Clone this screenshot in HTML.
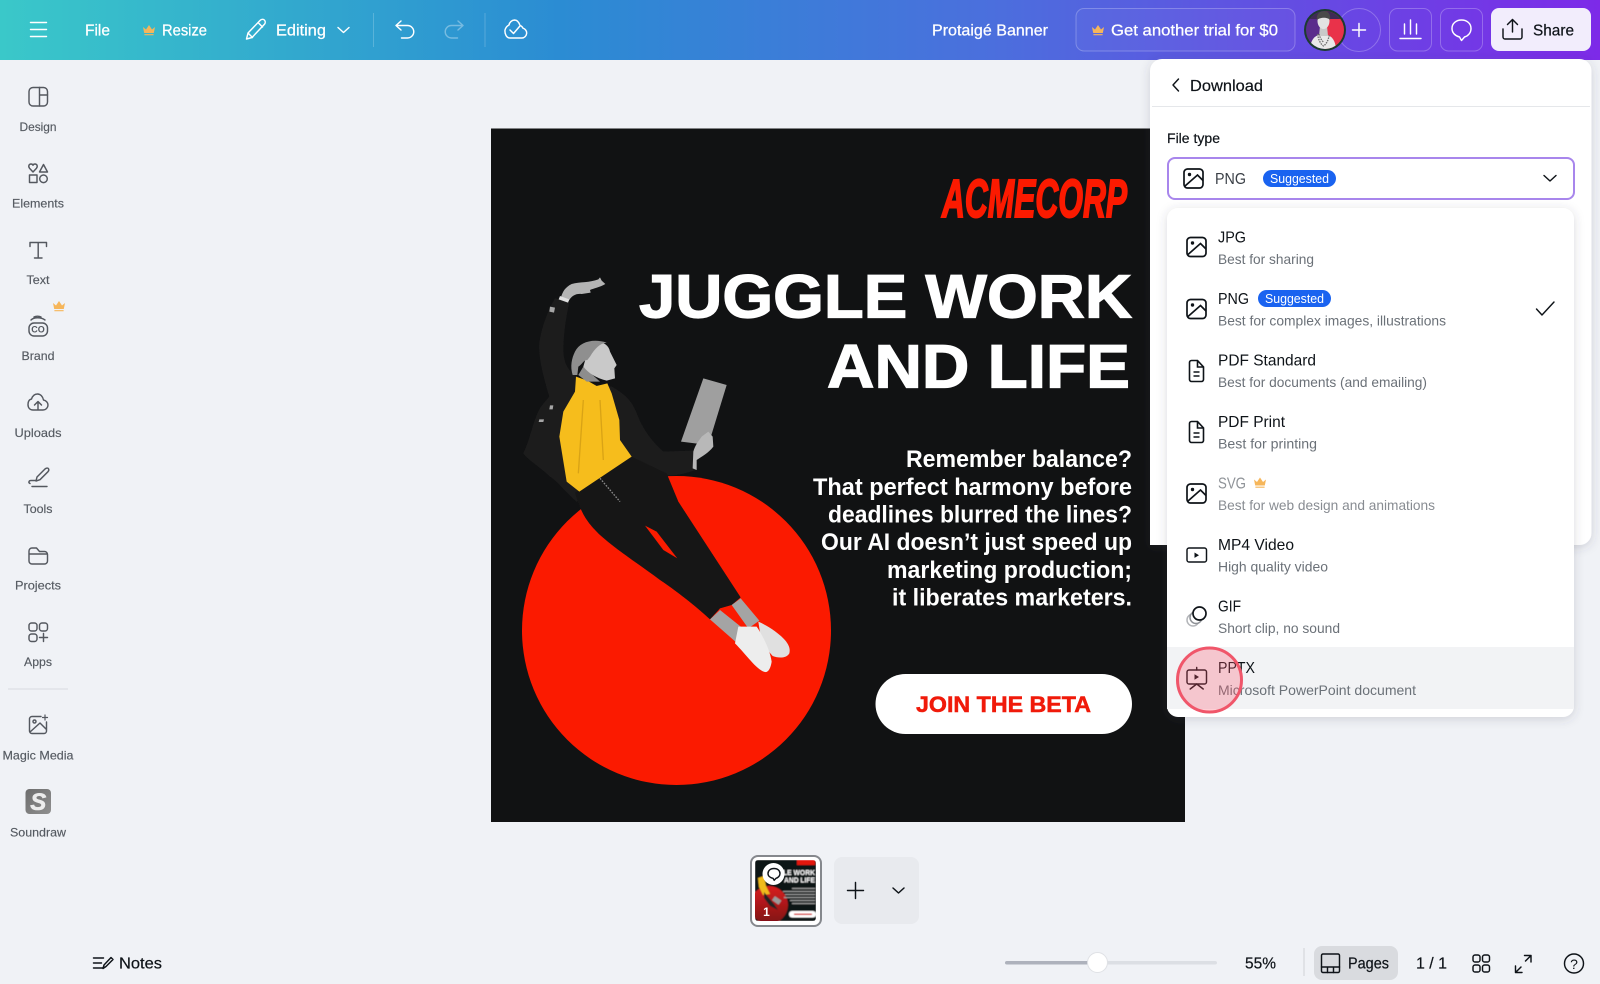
<!DOCTYPE html>
<html lang="en"><head><meta charset="utf-8"><title>Protaigé Banner</title>
<style>
html,body{margin:0;padding:0;width:1600px;height:984px;overflow:hidden;background:#f0f2f6}
svg{display:block;font-family:"Liberation Sans",sans-serif}
.h{fill:#fff;font-size:16px;stroke:#fff;stroke-width:.25px}
.s{fill:#555a61;font-size:12px;text-anchor:middle;stroke:#555a61;stroke-width:.15px}
.si{fill:none;stroke:#54585f;stroke-width:1.45;stroke-linecap:round;stroke-linejoin:round}
.w{fill:none;stroke:#fff;stroke-width:1.45;stroke-linecap:round;stroke-linejoin:round}
.k{fill:none;stroke:#0e1318;stroke-width:1.45;stroke-linecap:round;stroke-linejoin:round}
.t{fill:#0e1318;font-size:16px}
.d{fill:#6b7178;font-size:14px}
.b{fill:#0e1318;font-size:16px;stroke:#0e1318;stroke-width:.2px}
.body{fill:#fff;font-size:24px;font-weight:700;text-anchor:end}
</style></head><body>
<svg xmlns="http://www.w3.org/2000/svg" width="1600" height="984" viewBox="0 0 1600 984">
<defs>
<linearGradient id="hg" x1="0" x2="1" y1="0" y2="0"><stop offset="0" stop-color="#3ac8c9"/><stop offset=".35" stop-color="#2b8cd3"/><stop offset=".62" stop-color="#4b6fdd"/><stop offset="1" stop-color="#7d2ae8"/></linearGradient>
<linearGradient id="sd" x1="0" x2="1" y1="0" y2="1"><stop offset="0" stop-color="#6d6d6d"/><stop offset="1" stop-color="#8f8f8f"/></linearGradient>
<linearGradient id="tc" x1="0" x2="0" y1="0" y2="1"><stop offset="0" stop-color="#d81f1f"/><stop offset="1" stop-color="#7d1014"/></linearGradient>
<path id="crown" d="M0 2.500l3 2.500 3-4.500 3 4.500 3-2.500-1.200 6H1.200zM1.400 9.600h9.200v1.200H1.400z"/>
<g id="img"><rect x="-9.500" y="-9.500" width="19" height="19" rx="3.500" fill="none" stroke-width="1.700"/><circle cx="-4" cy="-4" r="1.700" fill="#0e1318" stroke="none"/><path d="M-8.500 7.500L4-3.500l5.500 5.500" fill="none" stroke-width="1.700"/></g>
<g id="doc"><path d="M-7-8.500a2 2 0 0 1 2-2h6l6 6.500v12.500a2 2 0 0 1-2 2H-5a2 2 0 0 1-2-2zM1-10.500v6.500h6M-3 1h6M-3 5h6" fill="none" stroke-width="1.600"/></g>
<clipPath id="av"><circle cx="1325" cy="30" r="19"/></clipPath>
<clipPath id="th"><rect x="755" y="860" width="61" height="61" rx="3"/></clipPath>
<filter id="sh" x="-10%" y="-10%" width="120%" height="120%"><feDropShadow dx="0" dy="2" stdDeviation="5" flood-color="#40475a" flood-opacity=".2"/></filter>
<filter id="soft"><feGaussianBlur stdDeviation="1"/></filter>
<filter id="soft2"><feGaussianBlur stdDeviation=".45"/></filter>
</defs>

<rect width="1600" height="984" fill="#f0f2f6"/>

<!-- Canvas -->
<g>
<rect x="491" y="128.500" width="694" height="693.500" fill="#111213"/>
<circle cx="676.500" cy="630.500" r="154.500" fill="#fb1a00"/>
<!-- woman -->
<g transform="translate(500 260) scale(.33333)" filter="url(#soft)">
<path d="M165 115C175 118 195 122 208 126C200 160 190 220 190 270C190 300 200 330 225 345L240 368L335 380C370 400 395 420 410 460C425 500 450 540 490 575L582 572L590 628C560 640 520 650 485 645L530 720L518 728L480 690L230 725C200 700 170 660 150 650C120 620 90 605 70 580C90 540 100 480 120 445C130 430 140 420 148 410C130 350 115 290 118 250C125 200 145 150 165 115Z" fill="#1f1e1f"/>
<path d="M225 698L395 590L500 640L535 725L722 1012L695 1035L660 1045L630 1078C600 1050 540 1000 480 960C420 915 350 870 300 825C270 795 245 770 225 698Z" fill="#151515"/>
<path d="M435 797L470 815L532 895L490 870Z" fill="#fb1a00"/>
<path d="M300 655L360 725" stroke="#8a8a8a" stroke-width="4" stroke-dasharray="5 4" fill="none"/>
<path d="M228 350L262 362L290 378L322 370L335 400L358 480L360 540L395 590L238 695L200 665L178 530L190 455L225 395Z" fill="#f6bd1c"/>
<path d="M250 420L235 640M300 420L310 600" stroke="#d9a312" stroke-width="4" fill="none"/>
<path d="M250 320L300 365L260 365L235 345Z" fill="#8d8d8d"/>
<path d="M270 250C300 240 325 250 330 275L350 315L343 325L345 355L320 362C290 355 265 340 250 320Z" fill="#c9c9c9"/>
<path d="M218 345C210 320 215 295 225 275C240 245 280 235 320 248C300 250 285 265 270 290L262 300C250 300 245 315 235 320L232 345Z" fill="#8f8f8f"/>
<path d="M183 112C188 95 195 82 215 72C240 65 270 68 295 58L300 52L305 62L316 72C300 82 280 85 270 90L272 98L245 102C230 100 215 105 205 125Z" fill="#b4b4b4"/>
<path d="M180 108L208 118L204 128L176 118Z" fill="#e0e0e0"/>
<path d="M610 355L680 375L625 555L543 545Z" fill="#9f9f9f"/>
<path d="M580 575C585 555 598 540 605 530L625 515L638 530L640 560C625 580 605 590 590 600L590 630L578 625Z" fill="#b8b8b8"/>
<path d="M630 1078L660 1050L735 1110L712 1150ZM695 1035L722 1015L778 1082L745 1105Z" fill="#a4a4a4"/>
<path d="M775 1085C800 1095 830 1115 850 1135C865 1150 872 1165 868 1180C860 1195 835 1195 818 1188L785 1150Z" fill="#e0e0e0"/>
<path d="M715 1100L770 1100C790 1130 810 1170 815 1205C812 1225 805 1238 795 1236C770 1230 740 1185 705 1150Z" fill="#ededed"/>
<path d="M150 140L165 143L162 158L148 155ZM118 478L132 478L130 486L116 486ZM150 436L160 436L158 448L148 448Z" fill="#a6a6a6"/>
</g>
<!-- text -->
<text x="942" y="217" font-size="54" font-weight="700" font-style="italic" fill="#fb1a00" stroke="#fb1a00" stroke-width="2" textLength="185" lengthAdjust="spacingAndGlyphs">ACMECORP</text>
<text x="639" y="317.500" font-size="61" font-weight="700" fill="#fff" stroke="#fff" stroke-width="1.200" textLength="493" lengthAdjust="spacingAndGlyphs">JUGGLE WORK</text>
<text x="827" y="387.500" font-size="61" font-weight="700" fill="#fff" stroke="#fff" stroke-width="1.200" textLength="303" lengthAdjust="spacingAndGlyphs">AND LIFE</text>
<text class="body" x="1132" y="467" textLength="226" lengthAdjust="spacingAndGlyphs">Remember balance?</text>
<text class="body" x="1132" y="495" textLength="319" lengthAdjust="spacingAndGlyphs">That perfect harmony before</text>
<text class="body" x="1132" y="522.500" textLength="304" lengthAdjust="spacingAndGlyphs">deadlines blurred the lines?</text>
<text class="body" x="1132" y="550" textLength="311" lengthAdjust="spacingAndGlyphs">Our AI doesn’t just speed up</text>
<text class="body" x="1132" y="578" textLength="245" lengthAdjust="spacingAndGlyphs">marketing production;</text>
<text class="body" x="1132" y="605.500" textLength="240" lengthAdjust="spacingAndGlyphs">it liberates marketers.</text>
<rect x="875.500" y="674" width="256.500" height="60" rx="30" fill="#fff"/>
<text x="916" y="712" font-size="22" font-weight="700" fill="#f01a0a" stroke="#f01a0a" stroke-width=".5" textLength="175" lengthAdjust="spacingAndGlyphs">JOIN THE BETA</text>
</g>

<!-- Header -->
<g>
<rect width="1600" height="60" fill="url(#hg)"/>
<path class="w" d="M30.500 22.500h16M30.500 29.500h16M30.500 36.500h16"/>
<text class="h" x="85" y="35.500" textLength="25" lengthAdjust="spacingAndGlyphs">File</text>
<use href="#crown" x="143" y="24.500" fill="#f6b65a"/>
<text class="h" x="162" y="35.500" textLength="45" lengthAdjust="spacingAndGlyphs">Resize</text>
<path class="w" d="M246.500 39l1.500-6 12-12.500c1.500-1.500 3.500-1.500 4.500-.3s1 3-.3 4.300L252 37.500zM248 33l4.500 4.500M258 22.500l4.500 4.500"/>
<text class="h" x="276" y="35.500" textLength="50" lengthAdjust="spacingAndGlyphs">Editing</text>
<path class="w" d="M338 27.500l5.500 5 5.500-5"/>
<path d="M373.500 13v34M485 13v34" stroke="#fff" stroke-opacity=".2"/>
<path class="w" d="M401 21l-5 4.500 5 4.500M396 25.500h11.500a6 6 0 0 1 0 12.500h-6"/>
<path class="w" style="opacity:.35" d="M458 21l5 4.500-5 4.500M463 25.500h-11.500a6 6 0 0 0 0 12.500h6"/>
<path class="w" d="M510 38h12a5 5 0 0 0 1-9.800 5 5 0 0 0-3-2.800c-1-3-3-5.400-5.500-5.400a6 6 0 0 0-5.500 5c-2 1-3.500 3-4 5-.4 4 1.500 8 5 8zM510 30l3.500 3.500 6-7"/>
<text class="h" x="932" y="35.500" textLength="116" lengthAdjust="spacingAndGlyphs">Protaigé Banner</text>
<rect x="1076" y="8.500" width="219" height="42.500" rx="8" fill="#fff" fill-opacity=".03" stroke="#fff" stroke-opacity=".25"/>
<use href="#crown" x="1092" y="24.500" fill="#f6b65a"/>
<text class="h" x="1111" y="35.500" textLength="167" lengthAdjust="spacingAndGlyphs">Get another trial for $0</text>
<circle cx="1359" cy="30" r="21.500" fill="none" stroke="#fff" stroke-opacity=".25"/>
<path class="w" d="M1352.500 30h13M1359 23.500v13"/>
<circle cx="1325" cy="30" r="21" fill="#1c3b30"/>
<g clip-path="url(#av)"><rect x="1304" y="9" width="21" height="42" fill="#5a2c8c"/><rect x="1325" y="9" width="21" height="42" fill="#e9324a"/><rect x="1304" y="9" width="42" height="10" fill="#3f2a55"/>
<path d="M1310 51c0-10 4-15 9-16h8c5 1 9 6 9 16z" fill="#e9e9e9"/>
<path d="M1320 26h7l1 10h-9z" fill="#c9c9c9"/>
<ellipse cx="1323.500" cy="21" rx="6" ry="8" fill="#e3e3e3"/>
<path d="M1317 20c-1-6 3-9 7-9s7 3 6 9c-2-3-10-3-13 0z" fill="#4a4a4a"/>
<path d="M1317.500 34c1 6 3 10 6 12 3-2 5-6 6-12M1319 34c1 4 3 7 4.500 8" stroke="#6e6e6e" stroke-width="1.300" stroke-dasharray="1.500 1" fill="none"/></g>
<rect x="1389.500" y="8.500" width="42" height="42.500" rx="8" fill="none" stroke="#fff" stroke-opacity=".25"/>
<path class="w" d="M1400 38.500h21M1404.500 34v-10M1410.500 34v-14M1416.500 34v-10"/>
<rect x="1440.500" y="8.500" width="42" height="42.500" rx="8" fill="none" stroke="#fff" stroke-opacity=".25"/>
<path class="w" d="M1461.500 20c5.500 0 9.500 3.500 9.500 8.500 0 4.500-3 7.500-6.500 8.500l-3 3.500-2-3.500c-4-1-7.500-4-7.500-8.500 0-5 4-8.500 9.500-8.500z"/>
<rect x="1491" y="8" width="100" height="43" rx="8" fill="#f2edfc"/>
<path class="k" d="M1503 29v8a2 2 0 0 0 2 2h15a2 2 0 0 0 2-2v-8M1512.500 32V19.500M1507.500 24.500l5-5 5 5"/>
<text class="b" x="1533" y="35.500" textLength="41" lengthAdjust="spacingAndGlyphs">Share</text>
</g>

<!-- Sidebar -->
<g>
<g class="si"><rect x="29" y="87.500" width="18.500" height="18.500" rx="4"/><path d="M39.500 87.500V106M39.500 95H47.500"/></g>
<text class="s" x="38" y="131" textLength="37" lengthAdjust="spacingAndGlyphs">Design</text>
<g class="si"><path d="M33 172l-3.500-3.800c-1.500-2-.5-4.200 1.500-4.200 1 0 1.700.5 2 1.200.3-.7 1-1.200 2-1.200 2 0 3 2.200 1.500 4.200zM43.500 164.500l4 7.500h-8zM29.500 175h7.500v7.500h-7.500z"/><circle cx="43.500" cy="178.800" r="3.800"/></g>
<text class="s" x="38" y="207.500" textLength="52" lengthAdjust="spacingAndGlyphs">Elements</text>
<path class="si" d="M30 246.500v-4h16.500v4M38.200 242.500V258M34.500 258h7.500"/>
<text class="s" x="38" y="284" textLength="23" lengthAdjust="spacingAndGlyphs">Text</text>
<use href="#crown" x="53" y="300.500" fill="#f6b65a"/>
<g class="si"><rect x="29" y="323" width="18.500" height="13" rx="5"/><path d="M31 320c3-3 10-3 14 0M34 317c2-1 5-1 7 0"/></g>
<text x="38" y="332.500" font-size="9" font-weight="700" fill="#54585f" text-anchor="middle">CO</text>
<text class="s" x="38" y="360" textLength="33" lengthAdjust="spacingAndGlyphs">Brand</text>
<path class="si" d="M33 410h10c3 0 5-2.500 5-5s-2-4.500-4.500-5c-.8-3.500-3-6-6-6s-5 2-6 5c-2.500.5-3.500 3-3.500 5.500 0 3.500 2 5.500 5 5.500zM38 410v-8M34.500 405l3.500-3.500 3.500 3.500"/>
<text class="s" x="38" y="437" textLength="47" lengthAdjust="spacingAndGlyphs">Uploads</text>
<path class="si" d="M36 481l1-4 8-8c1.500-1.200 3-1.200 3.500-.3s.4 2-.5 3l-8 8zM30 483.500c-2-1-1-3 1-3h5M32 486.500h15"/>
<text class="s" x="38" y="513" textLength="29" lengthAdjust="spacingAndGlyphs">Tools</text>
<path class="si" d="M29 551a3 3 0 0 1 3-3h4.500l3 3.500h5a3 3 0 0 1 3 3v6.500a3 3 0 0 1-3 3H32a3 3 0 0 1-3-3zM29 554h18"/>
<text class="s" x="38" y="589.500" textLength="46" lengthAdjust="spacingAndGlyphs">Projects</text>
<g class="si"><rect x="29" y="623" width="8" height="8" rx="2.500"/><rect x="39.500" y="623" width="8" height="8" rx="2.500"/><rect x="29" y="634" width="8" height="7.500" rx="2.500"/><path d="M43.500 633.500v8M39.500 637.500h8"/></g>
<text class="s" x="38" y="666" textLength="28" lengthAdjust="spacingAndGlyphs">Apps</text>
<rect x="8" y="688.500" width="60" height="1" fill="#d9dbe0"/>
<g class="si"><path d="M41 716.500H32a2.500 2.500 0 0 0-2.500 2.500v12a2.500 2.500 0 0 0 2.500 2.500h12a2.500 2.500 0 0 0 2.500-2.500v-9M30 732l10-9 6 6"/><circle cx="34.500" cy="721.500" r="1.500"/><path d="M45 715v5M42.500 717.500h5" stroke-width="1.200"/></g>
<text class="s" x="38" y="759.500" textLength="71" lengthAdjust="spacingAndGlyphs">Magic Media</text>
<rect x="25.500" y="789" width="25.500" height="25" rx="4" fill="url(#sd)"/>
<text x="38.200" y="810" font-size="24" font-weight="700" font-style="italic" fill="#ececec" stroke="#ececec" stroke-width=".6" text-anchor="middle">S</text>
<text class="s" x="38" y="836.500" textLength="56" lengthAdjust="spacingAndGlyphs">Soundraw</text>
</g>

<!-- Thumbnail & add page -->
<g>
<rect x="751" y="856" width="70" height="70" rx="7" fill="#fff" stroke="#85888d" stroke-width="2"/>
<g clip-path="url(#th)" filter="url(#soft2)">
<rect x="755" y="860" width="61" height="61" fill="#111213"/>
<circle cx="769" cy="905" r="19" fill="url(#tc)"/>
<rect x="797" y="860" width="18" height="5" fill="#e3180a"/>
<path d="M758 878l6-2 2 10 4 8-7 1-4-8z" fill="#f0bb1c"/>
<path d="M764 892l10 12 4 6-8-4-6-8z" fill="#222"/>
<rect x="773" y="898" width="8" height="5" fill="#9a9a9a" transform="rotate(35 777 900)"/>
<text x="815" y="875" font-size="7.500" font-weight="700" fill="#fff" text-anchor="end" textLength="32" lengthAdjust="spacingAndGlyphs">LE WORK</text>
<text x="815" y="882.500" font-size="7.500" font-weight="700" fill="#fff" text-anchor="end" textLength="31" lengthAdjust="spacingAndGlyphs">AND LIFE</text>
<path d="M792 888.500h23M783 891.500h32M785 894.500h30M784 897.500h31M790 900.500h25M792 903.500h23" stroke="#9c9c9c" stroke-width="1.300"/>
<rect x="789" y="911" width="27" height="6.500" rx="3" fill="#fff"/>
<rect x="794" y="913.500" width="18" height="1.500" fill="#d62020"/>
</g>
<circle cx="773.500" cy="874" r="11" fill="#fff"/>
<path class="k" d="M774 868.500c3.500 0 6 2 6 5 0 2.500-2 4.300-4 4.800l-1.800 2-1.200-2c-2.800-.5-5-2.300-5-4.800 0-3 2.500-5 6-5z"/>
<text x="766.500" y="916" font-size="12" font-weight="700" fill="#fff" text-anchor="middle">1</text>
<rect x="834" y="857" width="85" height="67" rx="8" fill="#e8eaee"/>
<path class="k" d="M847.500 890.500h16M855.500 882.500v16"/>
<path class="k" d="M893 888l5.500 5 5.500-5"/>
</g>

<!-- Bottom bar -->
<g>
<path class="k" d="M93.500 958h10M93.500 963h8M93.500 968h9M103 968.500l1-3.500 7-7.500 2 2-7 7z"/>
<text class="b" x="119" y="968.500" textLength="43" lengthAdjust="spacingAndGlyphs">Notes</text>
<rect x="1005" y="961" width="212" height="3.500" rx="2" fill="#dcdfe4"/>
<rect x="1005" y="961" width="92" height="3.500" rx="2" fill="#aeb2bc"/>
<circle cx="1097.500" cy="962.500" r="10" fill="#fff" stroke="#dfe1e5" stroke-width="1"/>
<text class="b" x="1245" y="968.500" textLength="31" lengthAdjust="spacingAndGlyphs">55%</text>
<rect x="1303.500" y="948" width="1" height="28" fill="#cfd2d7"/>
<rect x="1314" y="946" width="84" height="34" rx="8" fill="#d9dbdf"/>
<g class="k"><rect x="1321.500" y="954" width="18" height="18.500" rx="1.500"/><path d="M1321.500 967h18M1327.500 967v5.500M1333.500 967v5.500"/></g>
<text class="b" x="1348" y="968.500" textLength="41" lengthAdjust="spacingAndGlyphs">Pages</text>
<text class="b" x="1416" y="968.500" textLength="31" lengthAdjust="spacingAndGlyphs">1 / 1</text>
<g class="k"><rect x="1473" y="955" width="7" height="7" rx="2"/><rect x="1482.500" y="955" width="7" height="7" rx="2"/><rect x="1473" y="965" width="7" height="7" rx="2"/><rect x="1482.500" y="965" width="7" height="7" rx="2"/></g>
<path class="k" d="M1524.500 955.500h6.500v6.500M1531 955.500l-5.500 5.500M1522 972.500h-6.500v-6.500M1515.500 972.500l5.500-5.500"/>
<circle class="k" cx="1574" cy="963.500" r="9.500"/>
<text x="1574" y="969" font-size="14" fill="#0e1318" text-anchor="middle">?</text>
</g>

<!-- Download panel -->
<g>
<g filter="url(#sh)"><path d="M1162 59h417.500a12 12 0 0 1 12 12V533a12 12 0 0 1-12 12H1150V71a12 12 0 0 1 12-12z" fill="#fff"/></g>
<path class="k" d="M1178.500 79l-5.500 6 5.500 6"/>
<text class="b" x="1190" y="91" textLength="73" lengthAdjust="spacingAndGlyphs" stroke-width=".35">Download</text>
<rect x="1152" y="106" width="438" height="1" fill="#e5e7ea"/>
<text x="1167" y="143" font-size="13.500" fill="#0e1318" stroke="#0e1318" stroke-width=".2" textLength="53" lengthAdjust="spacingAndGlyphs">File type</text>
<rect x="1168" y="158" width="406" height="41" rx="7" fill="#fff" stroke="#a886ec" stroke-width="2"/>
<use href="#img" transform="translate(1193.500 178.500)" stroke="#0e1318"/>
<text class="t" x="1215" y="184" textLength="31" lengthAdjust="spacingAndGlyphs" style="fill:#3a3f46">PNG</text>
<rect x="1263" y="170" width="73" height="17" rx="8.500" fill="#1a63f0"/>
<text x="1270" y="183" font-size="13" fill="#fff" textLength="59" lengthAdjust="spacingAndGlyphs">Suggested</text>
<path class="k" d="M1544 175.500l6 5.500 6-5.500"/>

<g filter="url(#sh)"><rect x="1167" y="208" width="407" height="509" rx="11" fill="#fff"/></g>
<rect x="1167" y="647" width="407" height="62" fill="#f2f3f5"/>

<use href="#img" transform="translate(1196.500 247)" stroke="#0e1318"/>
<text class="t" x="1218" y="242.500" textLength="28" lengthAdjust="spacingAndGlyphs">JPG</text>
<text class="d" x="1218" y="264" textLength="96" lengthAdjust="spacingAndGlyphs">Best for sharing</text>

<use href="#img" transform="translate(1196.500 309)" stroke="#0e1318"/>
<text class="t" x="1218" y="304" textLength="31" lengthAdjust="spacingAndGlyphs">PNG</text>
<rect x="1258" y="290" width="73" height="17" rx="8.500" fill="#1a63f0"/>
<text x="1265" y="303" font-size="13" fill="#fff" textLength="59" lengthAdjust="spacingAndGlyphs">Suggested</text>
<text class="d" x="1218" y="325.500" textLength="228" lengthAdjust="spacingAndGlyphs">Best for complex images, illustrations</text>
<path class="k" d="M1536.500 309l5.500 6 12-13"/>

<use href="#doc" transform="translate(1196.500 371)" stroke="#0e1318"/>
<text class="t" x="1218" y="365.500" textLength="98" lengthAdjust="spacingAndGlyphs">PDF Standard</text>
<text class="d" x="1218" y="387" textLength="209" lengthAdjust="spacingAndGlyphs">Best for documents (and emailing)</text>

<use href="#doc" transform="translate(1196.500 432)" stroke="#0e1318"/>
<text class="t" x="1218" y="427" textLength="67" lengthAdjust="spacingAndGlyphs">PDF Print</text>
<text class="d" x="1218" y="448.500" textLength="99" lengthAdjust="spacingAndGlyphs">Best for printing</text>

<use href="#img" transform="translate(1196.500 493.500)" stroke="#0e1318"/>
<text class="t" x="1218" y="488.500" textLength="28" lengthAdjust="spacingAndGlyphs" style="fill:#8f9398">SVG</text>
<use href="#crown" x="1254" y="477" fill="#f6b65a"/>
<text class="d" x="1218" y="510" textLength="217" lengthAdjust="spacingAndGlyphs" style="fill:#888c92">Best for web design and animations</text>

<g class="k"><rect x="1187" y="548" width="19.500" height="14" rx="2"/></g>
<path d="M1194.500 552.500l4.500 2.700-4.500 2.700z" fill="#0e1318"/>
<text class="t" x="1218" y="550.200" textLength="76" lengthAdjust="spacingAndGlyphs">MP4 Video</text>
<text class="d" x="1218" y="571.700" textLength="110" lengthAdjust="spacingAndGlyphs">High quality video</text>

<circle cx="1193" cy="620" r="6" fill="none" stroke="#b4b6ba" stroke-width="1.500"/>
<circle cx="1196" cy="617.500" r="6" fill="#fff" stroke="#8f9297" stroke-width="1.500"/>
<circle cx="1199.500" cy="613.500" r="6.500" fill="#fff" stroke="#0e1318" stroke-width="1.700"/>
<text class="t" x="1218" y="611.700" textLength="23" lengthAdjust="spacingAndGlyphs">GIF</text>
<text class="d" x="1218" y="632.800" textLength="122" lengthAdjust="spacingAndGlyphs">Short clip, no sound</text>

<g class="k"><rect x="1187" y="670" width="19.500" height="14" rx="2"/><path d="M1196.700 670v-2.500M1196.700 684l-6.500 5M1196.700 684l6.500 5"/></g>
<path d="M1194.500 674.300l4.500 2.700-4.500 2.700z" fill="#0e1318"/>
<text class="t" x="1218" y="673.200" textLength="37" lengthAdjust="spacingAndGlyphs">PPTX</text>
<text class="d" x="1218" y="694.800" textLength="198" lengthAdjust="spacingAndGlyphs">Microsoft PowerPoint document</text>

<circle cx="1209.500" cy="680" r="32" fill="#ff5468" fill-opacity=".28" stroke="#f0566a" stroke-width="3"/>
</g>
</svg>
</body></html>
